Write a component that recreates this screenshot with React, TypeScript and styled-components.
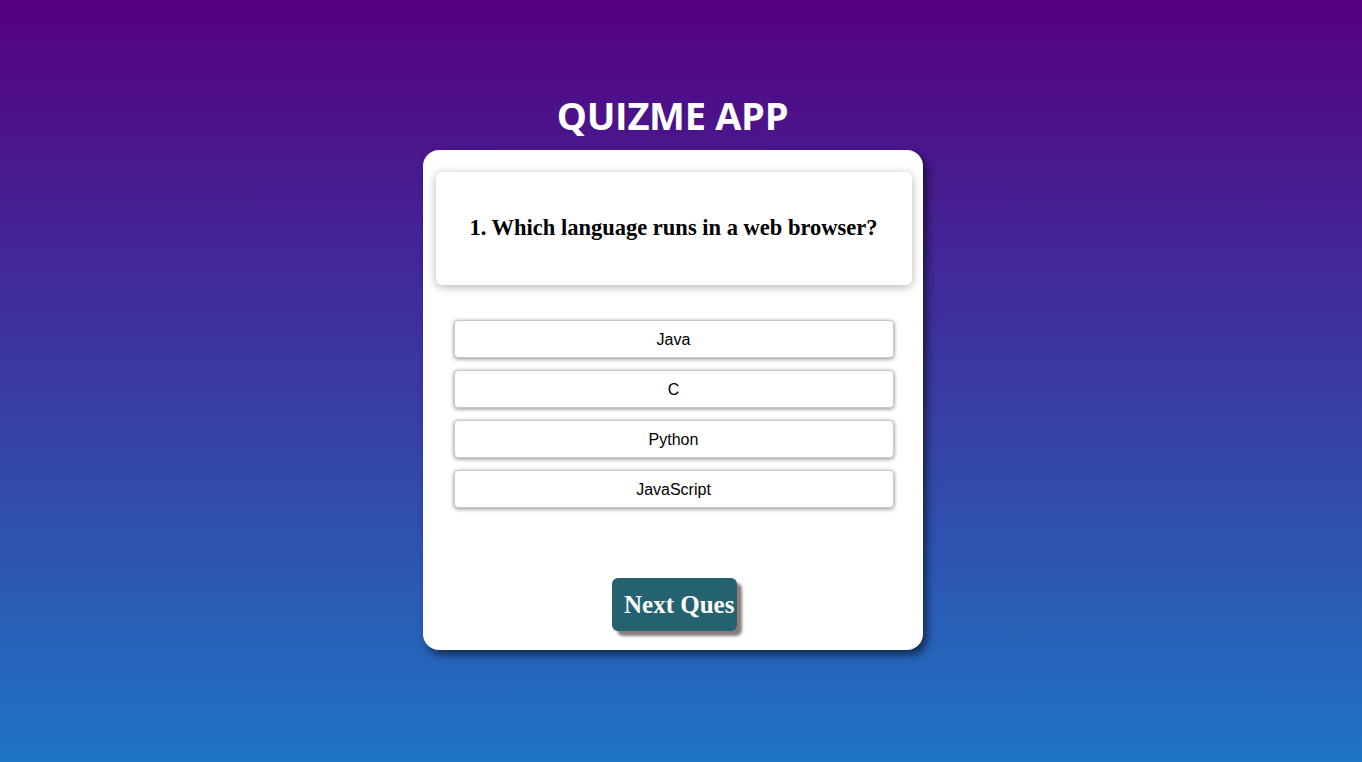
import React from "react";
import styled, { createGlobalStyle } from "styled-components";

const GlobalStyle = createGlobalStyle`
  html, body {
    margin: 0;
    padding: 0;
  }
  body {
    min-height: 762px;
    background: linear-gradient(180deg, #55007f 0%, #1f74c4 100%);
    font-family: "Liberation Sans", Arial, sans-serif;
  }
`;

// reference was shot with a scrollbar, so the content column is 1345 wide
const Page = styled.div`
  width: 1345px;
  height: 762px;
  display: flex;
  flex-direction: column;
  align-items: center;
  padding-top: 92px;
  box-sizing: border-box;
`;

const Title = styled.h1`
  margin: 0 0 12px;
  color: #fff;
  font-family: "Open Sans", "Noto Sans", sans-serif;
  font-weight: 700;
  font-size: 38px;
  line-height: 46px;
  letter-spacing: -0.3px;
`;

const Card = styled.div`
  width: 500px;
  height: 500px;
  background: #fff;
  border-radius: 16px;
  box-shadow: 4px 5px 8px rgba(0, 0, 0, 0.55);
  box-sizing: border-box;
  padding: 22px 11px 19px 13px;
  display: flex;
  flex-direction: column;
  align-items: center;
`;

const QuestionBox = styled.div`
  width: 100%;
  height: 113px;
  border-radius: 6px;
  box-shadow: 0 2px 10px rgba(0, 0, 0, 0.3);
  display: flex;
  align-items: center;
  justify-content: center;
`;

const Question = styled.h2`
  margin: 0 0 2px;
  font-family: "Liberation Serif", "Times New Roman", serif;
  font-size: 22.5px;
  font-weight: 700;
  color: #000;
`;

const Options = styled.div`
  margin-top: 35px;
  display: flex;
  flex-direction: column;
  gap: 12px;
  width: 440px;
`;

const Option = styled.button`
  height: 38px;
  width: 100%;
  background: #fff;
  border: 1px solid #c8c8c8;
  border-radius: 4px;
  box-shadow: 0 1px 4px rgba(0, 0, 0, 0.45);
  font-family: "Liberation Sans", Arial, sans-serif;
  font-size: 16px;
  color: #000;
  padding-top: 2px;
  cursor: pointer;
`;

const NextButton = styled.button`
  margin-top: auto;
  margin-left: 2px;
  width: 125px;
  height: 53px;
  border: none;
  border-radius: 6px;
  background: #256270;
  box-shadow: 5px 5px 3px #8a7c7c;
  color: #fff;
  font-family: "Liberation Serif", "Times New Roman", serif;
  font-weight: 700;
  font-size: 25px;
  padding: 0 0 0 12px;
  text-align: left;
  white-space: nowrap;
  overflow: visible;
  cursor: pointer;
`;

const options = ["Java", "C", "Python", "JavaScript"];

const App = () => {
  return (
    <>
      <GlobalStyle />
      <Page>
        <Title>QUIZME APP</Title>
        <Card>
          <QuestionBox>
            <Question>1. Which language runs in a web browser?</Question>
          </QuestionBox>
          <Options>
            {options.map((o) => (
              <Option key={o}>{o}</Option>
            ))}
          </Options>
          <NextButton>Next Ques</NextButton>
        </Card>
      </Page>
    </>
  );
};

export default App;
